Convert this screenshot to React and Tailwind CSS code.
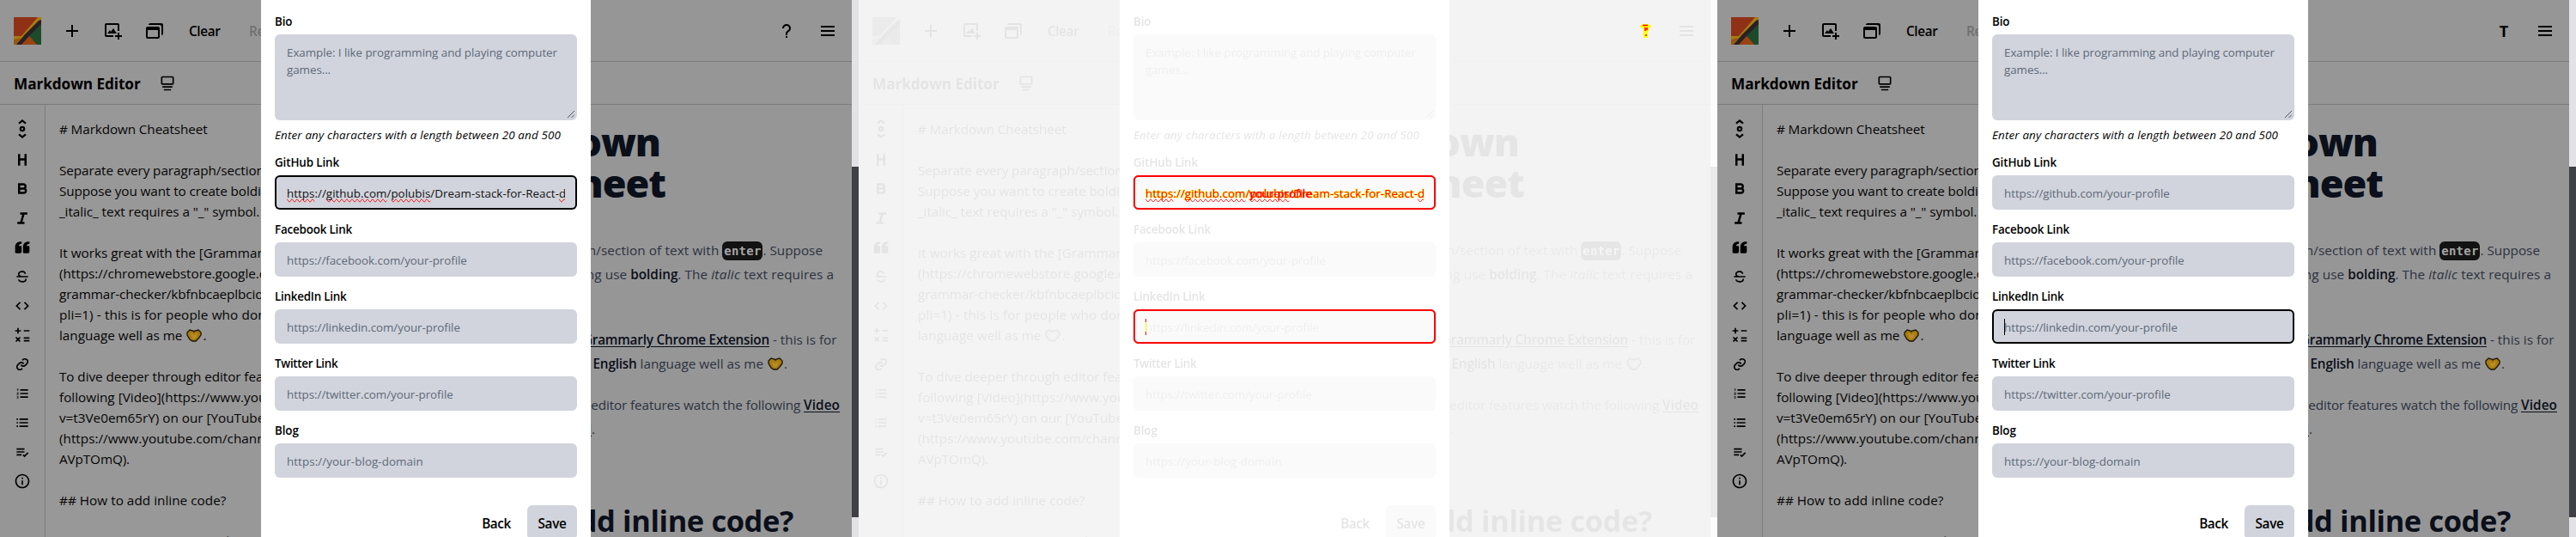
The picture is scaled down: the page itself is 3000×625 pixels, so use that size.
import React from "react";
import {
  BiPlus, BiImageAdd, BiWindows, BiCollection, BiQuestionMark, BiMenu, BiHeading, BiBold, BiItalic,
  BiSolidQuoteLeft, BiStrikethrough, BiCode, BiMath, BiLink, BiListOl, BiListUl, BiListCheck, BiInfoCircle,
} from "react-icons/bi";

const TOOLS = [
  BiHeading, BiBold, BiItalic, BiSolidQuoteLeft, BiStrikethrough, BiCode, BiMath, BiLink,
  BiListOl, BiListUl, BiListCheck, BiInfoCircle,
];

function Logo() {
  return (
    <svg className="size-8 shrink-0" viewBox="0 0 32 32">
      <rect width="32" height="32" fill="#903117" />
      <path d="M0 22h9L28 0h4v4L3 32H0z" fill="#a67c12" />
      <path d="M0 26v6h3l6-8z" fill="#93480f" opacity=".7" />
      <path d="M32 3v6L9 32H3l10-12L29 4z" fill="#292024" />
      <path d="M32 8v24h-5l-9-10z" fill="#1d4b2a" />
      <path d="M9 32l9-10 9 10z" fill="#9a4413" />
    </svg>
  );
}

function Scroller() {
  return (
    <svg className="h-[22px] w-[18px]" viewBox="0 0 18 22" fill="none" stroke="currentColor" strokeWidth="2.2">
      <path d="M5 4.6 9 1.4l4 3.2M5 17.4l4 3.2 4-3.2" />
      <circle cx="9" cy="11" r="2.2" />
    </svg>
  );
}

function Heart() {
  return (
    <svg className="mx-px inline-block h-[15px] w-[18px] align-[-2px]" viewBox="0 0 18 15">
      <path d="M1 4 4 1l4 1 1 1 1-1 4-1 3 3v3l-3 4-3 3H7l-3-2-3-5z" fill="#a67a12" stroke="#1c1503" strokeWidth="1.3" />
      <path d="M5 4l4 3 4-3-1 5-3 3-3-3z" fill="#b88e24" />
    </svg>
  );
}

const EDITOR = [
  ["# Markdown Cheatsheet", "tracking-[-0.12px]"],
  ["", ""],
  ["Separate every paragraph/section of", "tracking-[-0.08px]"],
  ["Suppose you want to create bolding", "tracking-[-0.1px]"],
  ['_italic_ text requires a "_" symbol.', "tracking-[-0.08px]"],
  ["", ""],
  ["It works great with the [Grammarly", "tracking-[-0.02px]"],
  ["(https://chromewebstore.google.com", "tracking-[-0.03px]"],
  ["grammar-checker/kbfnbcaeplbcioak", "tracking-[-0.12px]"],
  ["pli=1) - this is for people who don't", "tracking-[0.11px]"],
  ["language well as me ", "tracking-[0px]", true],
  ["", ""],
  ["To dive deeper through editor features", "tracking-[-0.08px]"],
  ["following [Video](https://www.youtube", "tracking-[0px]"],
  ["v=t3Ve0em65rY) on our [YouTube", "tracking-[-0.02px]"],
  ["(https://www.youtube.com/channel", "tracking-[0px]"],
  ["AVpTOmQ).", "tracking-[-0.12px]"],
  ["", ""],
  ["## How to add inline code?", "tracking-[0.02px]"],
  ["", ""],
  ["To add inline code, use the `", "tracking-[0px]"],
];

function Preview() {
  return (
    <article className="w-[672px] shrink-0 whitespace-nowrap bg-[#969696] text-[15.3px] leading-7 text-[#2b323f]">
      <h1 className="pt-[19px] text-right text-[45px] leading-[48px] font-extrabold tracking-[-1px] text-[#0a0f1a]">
        <span className="block w-[449px]">Markdown</span>
        <span className="block w-[455px]">Cheatsheet</span>
      </h1>
      <div className="mt-10 h-[84px] text-right">
        <p className="w-[638px]">
          <span className="tracking-[0.1px]">Separate every paragraph/section of text with </span>
          <code className="inline-block h-[22px] w-[47px] rounded-md bg-[#121212] text-center font-['DejaVu_Sans_Mono',monospace] text-[14px] leading-[22px] font-bold tracking-[0.25px] text-[#a5a5a5]">enter</code>
          . Suppose
        </p>
        <p className="w-[651px] tracking-[0.08px]">
          you want to create bolding use <b className="font-semibold tracking-normal text-[#0a0f1a]">bolding</b>. The <i className="tracking-[0.3px]">italic</i> text requires a
        </p>
      </div>
      <div className="mt-5 text-right">
        <p className="w-[654.5px]">
          It works great with the <a className="font-semibold tracking-[-0.22px] text-[#0a0f1a] underline underline-offset-2">Grammarly Chrome Extension</a> - this is for
        </p>
        <p className="w-[597px]">
          people who don't know <b className="font-semibold tracking-[-0.2px] text-[#0a0f1a]">English</b> language well as me <Heart />.
        </p>
      </div>
      <div className="mt-5 text-right">
        <p className="w-[658px] tracking-[-0.13px]">
          To dive deeper through editor features watch the following <a className="font-semibold tracking-[0.1px] text-[#0a0f1a] underline underline-offset-2">Video</a>
        </p>
        <p className="w-[373px]">
          on our <a className="font-semibold text-[#0a0f1a] underline underline-offset-2">YouTube channel</a>.
        </p>
      </div>
      <h2 className="mt-[73px] w-[604px] text-right text-[34.4px] leading-10 font-bold tracking-[-0.37px] text-[#0a0f1a]">
        How to add inline code?
      </h2>
    </article>
  );
}

function Field({ label, spacing, text, textSpacing = "", focused, value, caret }) {
  return (
    <div>
      <div className={`mt-[13px] mb-[5px] h-5 font-semibold text-black ${spacing}`}>{label}</div>
      <div className={`relative h-10 rounded-md bg-[#d1d4dc] px-3.5 pt-[11px] pb-2 ${focused ? "shadow-[inset_0_0_0_2px_#000]" : ""}`}>
        <div className={`h-full overflow-hidden whitespace-nowrap ${value ? "text-[#111]" : "text-[#606979]"} ${textSpacing}`}>
          {value || text}
        </div>
        {caret && <i className="absolute top-[11px] left-3.5 h-[19px] w-px bg-black" />}
      </div>
    </div>
  );
}

function Url() {
  const squiggle = "[text-decoration-line:spelling-error]";
  return (
    <span className="tracking-[0.02px]">
      <span className={squiggle}>https</span>://<span className={squiggle}>github.com</span>/<span className={squiggle}>polubis</span>/Dream-stack-for-React-<span className={squiggle}>developers</span>
    </span>
  );
}

function Modal({ github, linkedinFocused }) {
  return (
    <div className="absolute top-0 left-[304px] h-[625px] w-96 overflow-hidden bg-white px-4 pt-0.5 text-[13.4px] leading-5">
      <div className="mt-[13px] mb-[5px] h-5 font-semibold text-black tracking-[-0.1px]">Bio</div>
      <div className="relative h-[100px] rounded-md bg-[#d1d4dc] px-3.5 py-[11px] tracking-[-0.06px] whitespace-nowrap text-[#606979]">
        Example: I like programming and playing computer
        <br />
        games...
        <svg className="absolute right-[3px] bottom-[3px] size-2" viewBox="0 0 8 8" stroke="#444" strokeWidth=".9">
          <path d="M0 8 8 0M4.5 8 8 4.5" />
        </svg>
      </div>
      <div className="mt-[7px] -mb-px h-5 tracking-[0.15px] whitespace-nowrap text-black italic">
        Enter any characters with a length between 20 and 500
      </div>
      <Field
        label="GitHub Link"
        spacing="tracking-[-0.12px]"
        text={github === "blank" ? "" : "https://github.com/your-profile"}
        textSpacing="tracking-[-0.05px]"
        value={github === "filled" ? <Url /> : null}
        focused={github === "filled"}
      />
      <Field label="Facebook Link" spacing="tracking-[-0.18px]" text="https://facebook.com/your-profile" textSpacing="tracking-[-0.05px]" />
      <Field label="LinkedIn Link" spacing="tracking-[-0.23px]" text="https://linkedin.com/your-profile" textSpacing="tracking-[-0.05px]" focused={linkedinFocused} caret={linkedinFocused} />
      <Field label="Twitter Link" spacing="tracking-[-0.3px]" text="https://twitter.com/your-profile" textSpacing="tracking-[-0.05px]" />
      <Field label="Blog" spacing="tracking-[-0.1px]" text="https://your-blog-domain" textSpacing="tracking-[0.06px]" />
      <div className="mt-8 flex justify-end gap-[7px] text-[15.3px] leading-6 font-semibold text-black">
        <button className="h-10 w-[58px] rounded-md pt-px tracking-[-0.4px]">Back</button>
        <button className="h-10 w-[58px] rounded-md bg-[#d1d4dc] pt-px tracking-[-0.3px]">Save</button>
      </div>
    </div>
  );
}

function Page({ action, github, linkedinFocused, dimmed }) {
  return (
    <div className={`relative flex h-[625px] w-[1000px] overflow-hidden bg-[#969696] ${dimmed ? "opacity-10 grayscale" : ""}`}>
      <div className="w-[992px] shrink-0 overflow-hidden">
        <header className="flex h-[72px] items-center gap-6 px-4 shadow-[inset_0_-1px_0_#7c7c7c]">
          <Logo />
          <BiPlus size={24} />
          <BiImageAdd size={24} />
          <BiWindows size={24} />
          <span className="ml-1 w-[46px] text-[15.3px] font-semibold tracking-[-0.35px]">Clear</span>
          <span className="text-[15.3px] font-semibold tracking-[-0.2px] text-[#6f6f6f]">Reset</span>
          <div className="ml-auto flex items-center gap-6">
            {action === "help" && <BiQuestionMark size={24} />}
            {action === "user" && <span className="w-6 text-center text-[18px] font-bold">T</span>}
            <BiMenu size={24} />
          </div>
        </header>
        <div className="flex h-[50px] items-center px-4 shadow-[inset_0_-1px_0_#7c7c7c]">
          <h2 className="w-[169px] pt-0.5 text-[17.2px] font-bold tracking-[-0.07px] whitespace-nowrap">Markdown Editor</h2>
          <BiCollection size={20} className="rotate-180" />
        </div>
        <div className="flex h-[503px] overflow-hidden">
          <div className="flex w-[53px] shrink-0 flex-col items-center gap-3.5 border-r border-[#7c7c7c] pt-[18px] text-black">
            <div className="mb-0.5 flex h-5 items-center"><Scroller /></div>
            {TOOLS.map((Icon, i) => <Icon key={i} size={20} className="shrink-0" />)}
          </div>
          <div className="w-[267px] shrink-0 overflow-hidden bg-[#989898] py-4 pl-4 text-[15.3px] leading-6 whitespace-nowrap text-[#050505]">
            {EDITOR.map(([text, spacing, heart], i) => (
              <div key={i} className={`h-6 ${spacing}`}>{text}{heart && <><Heart />.</>}</div>
            ))}
          </div>
          <Preview />
        </div>
      </div>
      <div className="w-2 bg-[#e3e3e6] pt-[194px]">
        <div className="h-[408px] bg-[#3f3f46]" />
      </div>
      <Modal github={github} linkedinFocused={linkedinFocused} />
    </div>
  );
}

function DiffMarks() {
  const frame = "absolute left-[320px] h-10 w-[352px] rounded-md border-2 border-[#ff0000] outline outline-1 -outline-offset-1 outline-[#ff0000]";
  const url = "https://github.com/polubis/Dream-stack-for-React-developers";
  return (
    <div className="absolute inset-0 text-[13.4px] leading-5">
      <div className={`${frame} top-[204px]`} />
      <div className={`${frame} top-[360px]`} />
      <div className="absolute top-[215px] left-[334px] h-5 w-[324px] overflow-hidden whitespace-nowrap">
        <div className="absolute inset-0 tracking-[0.02px] text-[#ffff00] [-webkit-text-stroke:0.9px_#ffff00]">{url}</div>
        <div className="absolute inset-0 tracking-[0.02px] text-[#ff0000]"><Url /></div>
        <div className="absolute inset-y-0 left-[121px] tracking-[-0.05px] text-[#ff0000] [-webkit-text-stroke:0.3px_#ff0000]">your-profile</div>
      </div>
      <i className="absolute top-[371px] left-[334px] h-[19px] w-px border-y-4 border-[#ff0000] bg-[#ffff00]" />
      <svg className="absolute top-[27px] left-[909px] h-[18px] w-[15px]" viewBox="0 0 15 18">
        <path d="M1 3 5 1h5l4 2v2h-2l-1 4-1 1v7H5V6L1 5z" fill="#ffff00" />
        <path d="M4 2.5h6M7 5v4M9 5v3M7 14h2" stroke="#ff0000" strokeWidth="1.6" />
      </svg>
    </div>
  );
}

export default function App() {
  return (
    <div className="flex h-[625px] w-[3000px] overflow-hidden bg-white font-['Open_Sans','Noto_Sans',sans-serif] text-black">
      <Page action="help" github="filled" />
      <div className="relative">
        <Page github="blank" dimmed />
        <DiffMarks />
      </div>
      <Page action="user" github="empty" linkedinFocused />
    </div>
  );
}
